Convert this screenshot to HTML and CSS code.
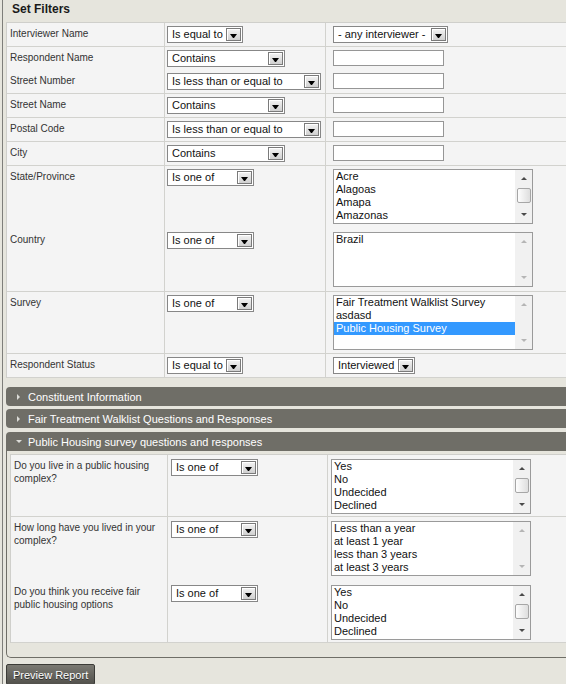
FILE: index.html
```html
<!DOCTYPE html>
<html lang="en">
<head>
<meta charset="utf-8">
<title>Set Filters</title>
<link rel="stylesheet" href="styles.css">
</head>
<body>
<div class="panel">
  <div class="title">Set Filters</div>

  <div class="grid main">
    <div class="row h24">
      <div class="cell lbl">Interviewer Name</div>
      <div class="cell op"><div class="sel w76"><span class="txt">Is equal to</span><span class="btn"><i></i></span></div></div>
      <div class="cell val"><div class="sel w115"><span class="txt">- any interviewer -</span><span class="btn"><i></i></span></div></div>
    </div>
    <div class="row h23 nb">
      <div class="cell lbl">Respondent Name</div>
      <div class="cell op"><div class="sel w118"><span class="txt">Contains</span><span class="btn"><i></i></span></div></div>
      <div class="cell val"><div class="inp"></div></div>
    </div>
    <div class="row h24">
      <div class="cell lbl">Street Number</div>
      <div class="cell op"><div class="sel w154"><span class="txt">Is less than or equal to</span><span class="btn"><i></i></span></div></div>
      <div class="cell val"><div class="inp"></div></div>
    </div>
    <div class="row h24">
      <div class="cell lbl">Street Name</div>
      <div class="cell op"><div class="sel w118"><span class="txt">Contains</span><span class="btn"><i></i></span></div></div>
      <div class="cell val"><div class="inp"></div></div>
    </div>
    <div class="row h24">
      <div class="cell lbl">Postal Code</div>
      <div class="cell op"><div class="sel w154"><span class="txt">Is less than or equal to</span><span class="btn"><i></i></span></div></div>
      <div class="cell val"><div class="inp"></div></div>
    </div>
    <div class="row h24">
      <div class="cell lbl">City</div>
      <div class="cell op"><div class="sel w118"><span class="txt">Contains</span><span class="btn"><i></i></span></div></div>
      <div class="cell val"><div class="inp"></div></div>
    </div>
    <div class="row h63 nb">
      <div class="cell lbl">State/Province</div>
      <div class="cell op"><div class="sel w87"><span class="txt">Is one of</span><span class="btn"><i></i></span></div></div>
      <div class="cell val">
        <div class="lb">
          <div class="items">
            <div class="it">Acre</div>
            <div class="it">Alagoas</div>
            <div class="it">Amapa</div>
            <div class="it">Amazonas</div>
          </div>
          <div class="sb"><span class="up"><i></i></span><span class="track"><span class="thumb"></span></span><span class="dn"><i></i></span></div>
        </div>
      </div>
    </div>
    <div class="row h63">
      <div class="cell lbl">Country</div>
      <div class="cell op"><div class="sel w87"><span class="txt">Is one of</span><span class="btn"><i></i></span></div></div>
      <div class="cell val">
        <div class="lb">
          <div class="items">
            <div class="it">Brazil</div>
          </div>
          <div class="sb off"><span class="up"><i></i></span><span class="track"></span><span class="dn"><i></i></span></div>
        </div>
      </div>
    </div>
    <div class="row h62">
      <div class="cell lbl">Survey</div>
      <div class="cell op"><div class="sel w87"><span class="txt">Is one of</span><span class="btn"><i></i></span></div></div>
      <div class="cell val">
        <div class="lb">
          <div class="items">
            <div class="it">Fair Treatment Walklist Survey</div>
            <div class="it">asdasd</div>
            <div class="it on">Public Housing Survey</div>
          </div>
          <div class="sb off"><span class="up"><i></i></span><span class="track"></span><span class="dn"><i></i></span></div>
        </div>
      </div>
    </div>
    <div class="row h24">
      <div class="cell lbl">Respondent Status</div>
      <div class="cell op"><div class="sel w76"><span class="txt">Is equal to</span><span class="btn"><i></i></span></div></div>
      <div class="cell val"><div class="sel w82"><span class="txt">Interviewed</span><span class="btn"><i></i></span></div></div>
    </div>
  </div>

  <div class="bar first"><span class="tw"><i class="tri-r"></i></span>Constituent Information</div>
  <div class="bar"><span class="tw"><i class="tri-r"></i></span>Fair Treatment Walklist Questions and Responses</div>

  <div class="section">
    <div class="bar open"><span class="tw"><i class="tri-d"></i></span>Public Housing survey questions and responses</div>
    <div class="sec-body">
      <div class="grid sec">
        <div class="row h62">
          <div class="cell lbl">Do you live in a public housing complex?</div>
          <div class="cell op"><div class="sel w87"><span class="txt">Is one of</span><span class="btn"><i></i></span></div></div>
          <div class="cell val">
            <div class="lb">
              <div class="items">
                <div class="it">Yes</div>
                <div class="it">No</div>
                <div class="it">Undecided</div>
                <div class="it">Declined</div>
              </div>
              <div class="sb"><span class="up"><i></i></span><span class="track"><span class="thumb"></span></span><span class="dn"><i></i></span></div>
            </div>
          </div>
        </div>
        <div class="row h64 nb">
          <div class="cell lbl">How long have you lived in your complex?</div>
          <div class="cell op"><div class="sel w87"><span class="txt">Is one of</span><span class="btn"><i></i></span></div></div>
          <div class="cell val">
            <div class="lb">
              <div class="items">
                <div class="it">Less than a year</div>
                <div class="it">at least 1 year</div>
                <div class="it">less than 3 years</div>
                <div class="it">at least 3 years</div>
              </div>
              <div class="sb off"><span class="up"><i></i></span><span class="track"></span><span class="dn"><i></i></span></div>
            </div>
          </div>
        </div>
        <div class="row h62">
          <div class="cell lbl">Do you think you receive fair public housing options</div>
          <div class="cell op"><div class="sel w87"><span class="txt">Is one of</span><span class="btn"><i></i></span></div></div>
          <div class="cell val">
            <div class="lb">
              <div class="items">
                <div class="it">Yes</div>
                <div class="it">No</div>
                <div class="it">Undecided</div>
                <div class="it">Declined</div>
              </div>
              <div class="sb"><span class="up"><i></i></span><span class="track"><span class="thumb"></span></span><span class="dn"><i></i></span></div>
            </div>
          </div>
        </div>
      </div>
    </div>
  </div>

  <div class="actions"><button class="preview" type="button">Preview Report</button></div>
</div>
</body>
</html>
```

FILE: styles.css
```css
html, body {
  margin: 0;
  padding: 0;
  overflow: hidden;
}
body {
  background: #e6e5dd;
  font-family: "Liberation Sans", Arial, sans-serif;
  color: #222;
}
.panel {
  margin-left: 2px;
  border-left: 1px solid #7e7e7a;
  padding-left: 3px;
  width: 600px;
  min-height: 100vh;
}
.title {
  height: 22px;
  line-height: 18px;
  padding-left: 6px;
  font-size: 12px;
  font-weight: bold;
  color: #1a1a1a;
}

/* filter grids */
.grid {
  border-left: 1px solid #cfcfcb;
  border-top: 1px solid #cfcfcb;
  background: #f4f4f4;
}
.row {
  display: grid;
}
.main .row { grid-template-columns: 158px 161px 1fr; }
.sec .row { grid-template-columns: 157px 160px 1fr; }
.cell {
  box-sizing: border-box;
  border-right: 1px solid #d2d2ce;
  border-bottom: 1px solid #d2d2ce;
  padding-top: 3px;
}
.nb .cell { border-bottom: 0; }
.h23 .cell { height: 23px; }
.h24 .cell { height: 24px; }
.h62 .cell { height: 62px; }
.h63 .cell { height: 63px; }
.h64 .cell { height: 64px; }
.sec .cell { padding-top: 4px; }

.lbl {
  font-size: 10px;
  line-height: 13px;
  color: #333;
  padding-left: 3px;
  padding-right: 4px;
}
.main .lbl { padding-top: 4px; }
.main .op { padding-left: 2px; }
.main .val { padding-left: 7px; }
.sec .op { padding-left: 3px; }
.sec .val { padding-left: 3px; }

/* drop-down */
.sel {
  display: flex;
  align-items: center;
  box-sizing: border-box;
  height: 17px;
  border: 1px solid #878787;
  background: #fff;
  padding: 0 1px 0 4px;
  font-size: 11px;
  color: #111;
}
.sel .txt {
  flex: 1;
  min-width: 0;
  white-space: nowrap;
  overflow: hidden;
  line-height: 15px;
}
.btn {
  flex: none;
  box-sizing: border-box;
  width: 15px;
  height: 13px;
  border: 1px solid #7a7a7a;
  background: linear-gradient(#f3f3f3, #d0d0d0);
  box-shadow: inset 1px 1px 0 #fff;
  display: flex;
  justify-content: center;
  align-items: flex-end;
  padding-bottom: 2px;
}
.btn i {
  width: 1px;
  height: 0;
  border-left: 3px solid transparent;
  border-right: 3px solid transparent;
  border-top: 4px solid #000;
}
.w76 { width: 76px; }
.w82 { width: 82px; }
.w87 { width: 87px; }
.w115 { width: 115px; }
.w118 { width: 118px; }
.w154 { width: 154px; }

.inp {
  box-sizing: border-box;
  width: 111px;
  height: 16px;
  border: 1px solid #969696;
  background: #fff;
}

/* list boxes */
.lb {
  display: flex;
  box-sizing: border-box;
  width: 200px;
  height: 55px;
  border: 1px solid #9a9a9a;
  background: #fff;
  font-size: 11px;
  color: #111;
}
.lb .items {
  flex: 1;
  min-width: 0;
  overflow: hidden;
}
.lb .it {
  line-height: 13px;
  padding-left: 2px;
  white-space: nowrap;
}
.lb .it.on {
  background: #3399ff;
  color: #fff;
}
.sb {
  flex: none;
  width: 17px;
  background: #f1f1f1;
  display: flex;
  flex-direction: column;
}
.sb .up, .sb .dn {
  height: 17px;
  display: flex;
  align-items: center;
  justify-content: center;
}
.sb .up i {
  width: 0;
  height: 0;
  border-left: 3px solid transparent;
  border-right: 3px solid transparent;
  border-bottom: 3px solid #4a4a4a;
}
.sb .dn i {
  width: 0;
  height: 0;
  border-left: 3px solid transparent;
  border-right: 3px solid transparent;
  border-top: 3px solid #4a4a4a;
}
.sb.off .up i { border-bottom-color: #b5b5b5; }
.sb.off .dn i { border-top-color: #b5b5b5; }
.sb .track {
  flex: 1;
  display: flex;
  justify-content: center;
  padding-top: 1px;
}
.thumb {
  box-sizing: border-box;
  width: 14px;
  height: 15px;
  border: 1px solid #a6a6a6;
  border-radius: 2px;
  background: linear-gradient(to right, #fdfdfd, #dedede);
}

/* collapsible section bars */
.bar {
  display: flex;
  align-items: center;
  height: 19px;
  background: #6f6e67;
  color: #fff;
  font-size: 11px;
  border-radius: 4px 0 0 4px;
  padding-left: 11px;
  margin-top: 3px;
  white-space: nowrap;
}
.bar.first { margin-top: 9px; }
.bar.open {
  margin-top: 0;
  border-radius: 4px 0 0 0;
}
.tw {
  width: 11px;
  display: flex;
  align-items: center;
}
.tri-r {
  width: 0;
  height: 0;
  border-top: 3px solid transparent;
  border-bottom: 3px solid transparent;
  border-left: 3px solid #dcdcd8;
}
.tri-d {
  width: 0;
  height: 0;
  margin-left: -1px;
  border-left: 3px solid transparent;
  border-right: 3px solid transparent;
  border-top: 3px solid #dcdcd8;
}
.section { margin-top: 4px; }
.sec-body {
  border-left: 1px solid #6f6e67;
  border-bottom: 1px solid #6f6e67;
  border-bottom-left-radius: 5px;
  padding: 3px 0 14px 3px;
}

.actions { padding-top: 6px; }
.preview {
  font: 11px "Liberation Sans", Arial, sans-serif;
  color: #fff;
  height: 21px;
  padding: 0 6px;
  white-space: nowrap;
  border: 1px solid #3b3b37;
  border-radius: 2px;
  background: linear-gradient(#7a7972, #52514c);
  text-shadow: 0 1px 0 #2e2e2b;
}
```
